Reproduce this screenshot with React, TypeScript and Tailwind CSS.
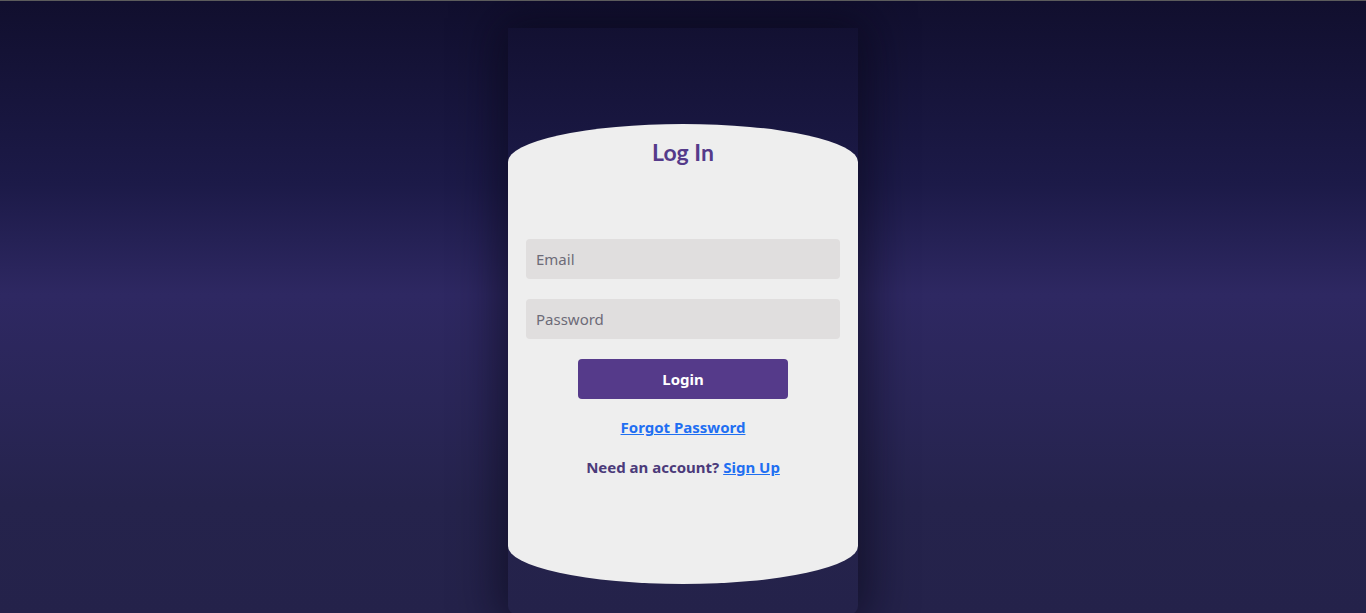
import React, { useState } from "react";

const App: React.FC = () => {
  const [email, setEmail] = useState("");
  const [password, setPassword] = useState("");

  return (
    <div
      className="h-[613px] overflow-hidden border-t border-[#5c5c5c] pt-[27px] bg-[linear-gradient(to_bottom,#110f2e_0%,#1c1a48_30%,#2e2862_48%,#2a2658_65%,#25234c_82%,#24224a_100%)]"
      style={{ fontFamily: '"Noto Sans", "Open Sans", Arial, sans-serif' }}
    >
      {/* Outer card */}
      <div className="mx-auto flex h-[586px] w-[350px] flex-col rounded-b-lg pt-[96px] shadow-[0_0_45px_10px_rgba(8,6,24,0.6)]">
        {/* Pill panel */}
        <div className="flex h-[460px] flex-col items-center rounded-[175px/38px] bg-[#eeeeee] px-[18px]">
          <h1
            className="mt-[14px] text-[23px] font-bold leading-7 text-[#553a8a]"
            style={{ fontFamily: 'Lato, "Noto Sans", sans-serif' }}
          >
            Log In
          </h1>

          <form className="mt-[73px] flex w-full flex-col items-center" onSubmit={(e) => e.preventDefault()}>
            <input
              type="email"
              placeholder="Email"
              value={email}
              onChange={(e) => setEmail(e.target.value)}
              className="h-10 w-full rounded bg-[#e0dede] px-[10px] text-[15px] text-[#333] outline-none placeholder:text-[#6d6b78]"
            />
            <input
              type="password"
              placeholder="Password"
              autoFocus
              value={password}
              onChange={(e) => setPassword(e.target.value)}
              className="mt-5 h-10 w-full rounded bg-[#e0dede] px-[10px] text-[15px] text-[#333] caret-[#1a1633] outline-none placeholder:text-[#6d6b78]"
            />
            <button
              type="submit"
              className="mt-5 h-10 w-[210px] rounded bg-[#553a8a] text-[15px] font-bold text-white"
            >
              Login
            </button>
          </form>

          <a href="#" className="mt-[16px] text-[15px] font-bold leading-6 text-[#1f6ff2] underline">
            Forgot Password
          </a>
          <p className="mt-4 text-[15px] font-bold leading-6 text-[#4b3a7a]">
            Need an account?{" "}
            <a href="#" className="text-[#1f6ff2] underline">
              Sign Up
            </a>
          </p>
        </div>
      </div>
    </div>
  );
};

export default App;
